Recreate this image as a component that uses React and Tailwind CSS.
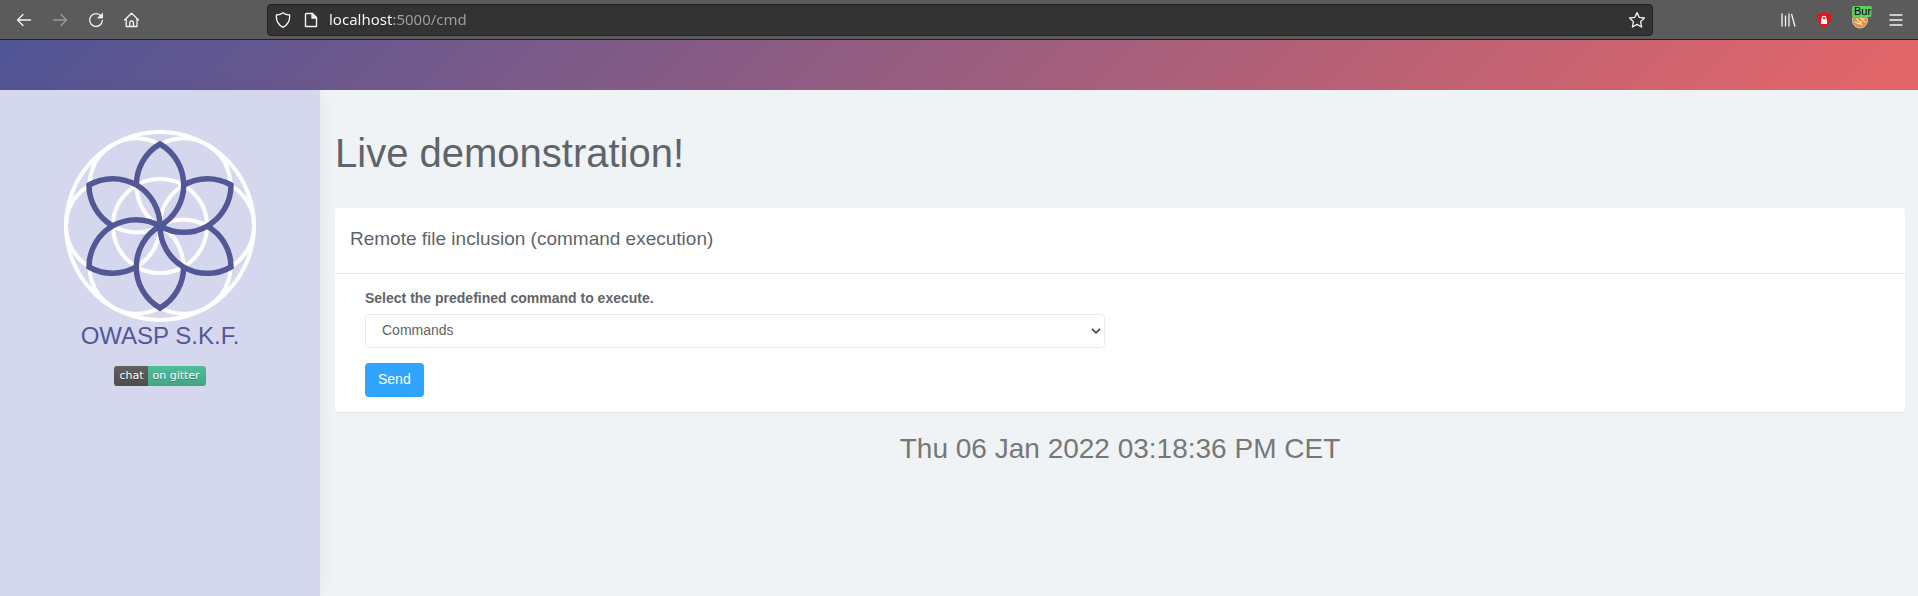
const PETALS = [0, 60, 120, 180, 240, 300];

function Logo() {
  return (
    <svg viewBox="-96 -96 192 192" className="size-48" fill="none" role="img" aria-label="OWASP S.K.F. logo">
      <g stroke="#fff" strokeWidth="4">
        <circle r="94" />
        <circle r="47" />
        {PETALS.map((a) => (
          <circle key={a} cx="47" r="47" transform={`rotate(${a})`} />
        ))}
      </g>
      <g stroke="#525796" strokeWidth="5.5" strokeLinejoin="miter">
        {PETALS.map((a) => (
          <path
            key={a}
            transform={`rotate(${a})`}
            d="M-23.6 -41A47.3 47.3 0 0 1 0 -82A47.3 47.3 0 0 1 0 0"
          />
        ))}
      </g>
    </svg>
  );
}

function NavIcon({ label, className = "", children }) {
  return (
    <button type="button" aria-label={label} className={`flex size-9 items-center justify-center text-[#f4f4f4] ${className}`}>
      <svg viewBox="0 0 16 16" className="size-4 overflow-visible" fill="none" stroke="currentColor" strokeWidth="1.3" strokeLinecap="round" strokeLinejoin="round">
        {children}
      </svg>
    </button>
  );
}

function BrowserBar() {
  return (
    <div className="flex h-10 items-center border-b border-[#222] bg-[#5b5b5b] pr-1 pl-1.5">
      <nav className="flex" aria-label="Browser">
        <NavIcon label="Back"><path d="M14.5 8H1.5M7 2.5L1.5 8L7 13.5" /></NavIcon>
        <NavIcon label="Forward" className="opacity-40"><path d="M1.5 8H14.5M9 2.5L14.5 8L9 13.5" /></NavIcon>
        <NavIcon label="Reload">
          <path d="M13 4A6.4 6.4 0 1 0 14.4 8.5" />
          <path d="M14.5 1.6V6H10Z" fill="currentColor" strokeWidth="0.8" />
        </NavIcon>
        <NavIcon label="Home">
          <path d="M.6 8L7.600 1.200L14.600 8M2.200 6.500V14.500H13V6.500M5.800 14.300V10.500Q5.800 9 7.600 9T9.400 10.500V14.300" />
        </NavIcon>
      </nav>
      <div className="ml-[117px] flex h-8 w-[1386px] max-w-[73%] items-center rounded-sm border border-[#222] bg-[#333] px-[7px] text-[#f4f4f4]">
        <svg viewBox="0 0 16 16" className="size-4 shrink-0" fill="none" stroke="currentColor" strokeWidth="1.3" strokeLinejoin="round">
          <path d="M8 .8Q10.5 2.8 14.6 3Q15.4 11.500 8 15.300Q.6 11.500 1.400 3Q5.500 2.800 8 .8Z" />
        </svg>
        <svg viewBox="0 0 16 16" className="ml-3 size-4 shrink-0" fill="none" stroke="currentColor" strokeWidth="1.4" strokeLinejoin="round">
          <path d="M3.500 1.500H9.500L13.500 5.500V14.500H2.500V2.500Q2.500 1.500 3.500 1.500Z" />
          <path d="M9 1.500V6H13.500Z" fill="currentColor" />
        </svg>
        <input
          type="text"
          aria-label="Address"
          className="ml-2.5 min-w-0 flex-1 bg-[linear-gradient(90deg,#fff_65px,#a0a0a0_65px)] bg-clip-text font-['Noto_Sans',sans-serif] text-[15px] text-transparent outline-none"
          defaultValue="localhost:5000/cmd"
        />
        <button type="button" aria-label="Bookmark">
          <svg viewBox="0 0 16 16" className="size-4 overflow-visible" fill="none" stroke="currentColor" strokeWidth="1.3" strokeLinejoin="round">
            <path d="M8 .6L10.200 5.300L15.400 6L11.600 9.600L12.600 15L8 12.400L3.400 15L4.400 9.600L.6 6L5.800 5.300Z" />
          </svg>
        </button>
      </div>
      <div className="ml-auto flex">
        <NavIcon label="Library"><path d="M2 1.500V14.500M5.500 3.500V14.500M9 1.500V14.500M11.500 2L15 14.500" strokeLinecap="butt" /></NavIcon>
        <NavIcon label="Shield">
          <path d="M8 0Q10.500 2 15 2.200Q15.500 11.500 8 16Q.5 11.500 1 2.200Q5.500 2 8 0Z" fill="#e81313" stroke="none" />
          <rect x="5" y="7" width="6" height="5" fill="#fff" stroke="none" />
          <path d="M6.200 7V5.800Q6.200 4.400 8 4.400T9.800 5.800V7" />
        </NavIcon>
        <div className="relative flex">
          <NavIcon label="Proxy">
            <circle cx="8" cy="8.500" r="7.500" fill="#e98b35" stroke="#c9cdd0" strokeWidth="1" />
            <path d="M3 10L7 12L12 7M5 7L10 13M9 6L13 10" stroke="#fbe3c3" />
          </NavIcon>
          <span className="absolute top-1 left-2.5 h-[11px] w-5 overflow-hidden rounded-xs bg-[#63cb63] pl-0.5 font-['Liberation_Sans',sans-serif] text-[11px] leading-[11px] text-black">Burp</span>
        </div>
        <NavIcon label="Menu"><path d="M2 3H14M2 8H14M2 13H14" /></NavIcon>
      </div>
    </div>
  );
}

export default function App() {
  return (
    <div className="flex min-h-screen flex-col bg-[#eff3f6] font-['Liberation_Sans',Arial,sans-serif] text-sm text-[#5f6468]">
      <BrowserBar />
      <header className="h-[50px] bg-[linear-gradient(135deg,#505596_0%,#e56668_100%)]" />
      <div className="flex flex-1">
        <aside className="flex w-80 shrink-0 flex-col items-center bg-[#d5d7ee] pt-10 shadow-[0_0_16px_rgba(0,0,0,0.06)]">
          <Logo />
          <h2 className="text-2xl leading-7 text-[#525796]">OWASP S.K.F.</h2>
          <a
            href="#chat"
            className="mt-4 flex h-5 overflow-hidden rounded-[3px] font-['DejaVu_Sans',sans-serif] text-[11px] leading-5 text-white [text-shadow:0_1px_0_rgba(0,0,0,0.3)]"
          >
            <span className="bg-linear-to-b from-[#606060] to-[#4d4d4d] px-[5px]">chat</span>
            <span className="bg-linear-to-b from-[#50bc9b] to-[#40a686] pr-1.5 pl-1">on gitter</span>
          </a>
        </aside>
        <main className="flex-1 pt-10 pr-[13px] pl-[15px]">
          <h1 className="text-[40px] leading-[46px]">Live demonstration!</h1>
          <section className="mt-8 rounded-sm bg-white shadow-[0_1px_1px_rgba(0,0,0,0.05)]">
            <h2 className="border-b border-[#e9ecee] px-[15px] pt-[18px] pb-[22px] text-[19px] leading-[25px]">
              Remote file inclusion (command execution)
            </h2>
            <form className="p-[15px]" onSubmit={(e) => e.preventDefault()}>
              <div className="flex w-1/2 flex-col items-start px-[15px]">
                <label htmlFor="command" className="leading-[18px] font-bold">
                  Select the predefined command to execute.
                </label>
                <div className="relative mt-[7px] w-full">
                  <select
                    id="command"
                    className="block h-[34px] w-full appearance-none rounded-sm border border-[#e9ecee] bg-white px-4 pb-0.5 text-sm text-[#5f6468]"
                  >
                    <option>Commands</option>
                  </select>
                  <svg viewBox="0 0 10 6" className="pointer-events-none absolute top-3.5 right-1 h-1.5 w-2.5" fill="none" stroke="#484c50" strokeWidth="1.8">
                    <path d="M1 .8L5 4.800L9 .8" />
                  </svg>
                </div>
                <button type="submit" className="mt-[15px] h-[34px] rounded-sm bg-[#30a5ff] px-[13px] pb-0.5 text-white">
                  Send
                </button>
              </div>
            </form>
          </section>
          <p className="mt-[21px] text-center text-[28px] leading-8 text-[#777]">Thu 06 Jan 2022 03:18:36 PM CET</p>
        </main>
      </div>
    </div>
  );
}
